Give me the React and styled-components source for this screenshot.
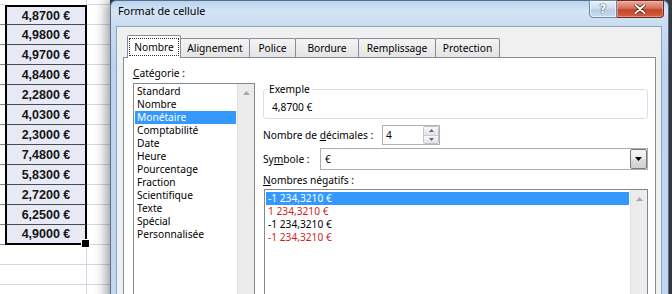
import React from 'react';
import styled, { createGlobalStyle } from 'styled-components';

const UI = `"Noto Sans", "Open Sans", sans-serif`;

const GlobalStyle = createGlobalStyle`
  html, body { margin: 0; padding: 0; }
  body { width: 672px; height: 294px; overflow: hidden; background: #3a3d42; }
  * { box-sizing: border-box; }
`;

const Screen = styled.div`
  display: flex;
  width: 672px;
  height: 294px;
  overflow: hidden;
  background: #3a3d42;
`;

/* ---------- spreadsheet ---------- */
const Sheet = styled.div`
  flex: none;
  width: 110px;
  height: 294px;
  background: #fff;
  display: flex;
  flex-direction: column;
  overflow: hidden;
`;

const SheetRow = styled.div`
  flex: none;
  display: grid;
  grid-template-columns: 5px 82px 1fr;
  height: ${p => p.$h}px;
`;

const EdgeCell = styled.div`
  border-bottom: 1px solid ${p => (p.$dark ? '#8a8a8a' : '#d0d7e5')};
`;

const ValueCell = styled.div`
  position: relative;
  display: flex;
  align-items: center;
  justify-content: center;
  font: bold 12.5px "Liberation Sans", Arial, sans-serif;
  color: #151515;
  background: ${p => (p.$sel ? '#e7eaf5' : '#fff')};
  border-left: ${p => (p.$sel ? '2px solid #000' : 'none')};
  border-right: ${p => (p.$sel ? '2px solid #000' : '1px solid #d0d7e5')};
  border-top: ${p => (p.$first ? '2px solid #000' : 'none')};
  border-bottom: ${p =>
    p.$last ? '2px solid #000' : p.$sel ? '1px solid #4a4a4a' : p.$blank ? 'none' : '1px solid #d0d7e5'};

  &::after {
    content: '';
    display: ${p => (p.$last ? 'block' : 'none')};
    position: absolute;
    right: -5px;
    bottom: -5px;
    width: 7px;
    height: 7px;
    background: #000;
    border: 1px solid #fff;
    z-index: 2;
  }
`;

const SideCell = styled.div`
  border-bottom: ${p => (p.$blank ? 'none' : '1px solid #d0d7e5')};
`;

/* ---------- dialog window ---------- */
const Dialog = styled.div`
  flex: none;
  width: 559px;
  height: 340px;
  position: relative;
  z-index: 1;
  display: flex;
  flex-direction: column;
  padding: 0 6px 0 5px;
  border: 1px solid #55708f;
  border-bottom: none;
  border-radius: 6px 6px 0 0;
  background: linear-gradient(180deg, #b9d3ee 0px, #d4e4f5 10px, #c9dcf1 24px, #bcd4ee 60px, #c2d8ef 100%);
  box-shadow: -3px 0 12px 1px rgba(0, 0, 0, 0.38);
`;

const TitleBar = styled.div`
  flex: none;
  height: 25px;
  display: flex;
  align-items: flex-start;
  justify-content: space-between;
  margin-right: -2px;
`;

const Title = styled.div`
  padding: 3px 0 0 2px;
  font: 10.8px/14px ${UI};
  color: #000;
`;

const CaptionButtons = styled.div`
  display: flex;
  margin-top: -1px;
`;

const CaptionButton = styled.div`
  width: ${p => p.$w}px;
  height: 18px;
  display: flex;
  align-items: center;
  justify-content: center;
  border: 1px solid ${p => (p.$close ? '#6b2a22' : '#6d86a3')};
  border-left: ${p => (p.$close ? 'none' : undefined)};
  border-radius: ${p => (p.$close ? '0 0 4px 0' : '0 0 0 4px')};
  background: ${p =>
    p.$close
      ? 'linear-gradient(180deg, #e9a99c 0%, #d7715d 45%, #c4442b 55%, #d2613f 100%)'
      : 'linear-gradient(180deg, #e6eef8 0%, #d0deef 45%, #b8cce4 55%, #c9dbee 100%)'};
  box-shadow: inset 0 0 0 1px ${p => (p.$close ? 'rgba(255,200,190,0.45)' : 'rgba(255,255,255,0.6)')};
`;

const HelpGlyph = styled.span`
  font: bold 12px/12px "DejaVu Sans", sans-serif;
  color: #ffffff;
  text-shadow: 0 0 1px #3f5670, 0 0 1px #3f5670, 0 0 1px #3f5670;
`;

const Client = styled.div`
  flex: 1;
  display: flex;
  flex-direction: column;
  background: #f0f0f0;
  border: 1px solid #8fa6bf;
  padding: 8px 5px 0 6px;
`;

const TabStrip = styled.div`
  position: relative;
  z-index: 1;
  flex: none;
  display: flex;
  align-items: flex-end;
  height: 23px;
  margin-bottom: -1px;
  padding-left: 4px;
`;

const Tab = styled.div`
  position: relative;
  z-index: ${p => (p.$active ? 2 : 1)};
  flex: none;
  width: ${p => p.$w}px;
  height: ${p => (p.$active ? 23 : 19)}px;
  margin-left: ${p => (p.$first ? 0 : -1)}px;
  margin-bottom: ${p => (p.$active ? 0 : 1)}px;
  display: flex;
  align-items: ${p => (p.$active ? 'flex-start' : 'center')};
  justify-content: center;
  padding-top: ${p => (p.$active ? 2 : 0)}px;
  border: 1px solid #898c95;
  border-bottom: none;
  border-radius: 2px 2px 0 0;
  background: ${p => (p.$active ? '#fff' : 'linear-gradient(180deg, #f4f4f4 0%, #ececec 50%, #e3e3e3 100%)')};
  font: 10.2px/13px ${UI};
  color: #000;
`;

const FocusRect = styled.span`
  display: flex;
  align-items: center;
  justify-content: center;
  width: 50px;
  height: 18px;
  border: 1px dotted #333;
`;

const Panel = styled.div`
  flex: 1;
  display: flex;
  gap: 8px;
  background: #fff;
  border: 1px solid #898c95;
  padding: 9px 7px 0 9px;
`;

const Column = styled.div`
  display: flex;
  flex-direction: column;
  width: ${p => (p.$w ? `${p.$w}px` : 'auto')};
  flex: ${p => (p.$w ? 'none' : '1')};
`;

const FieldLabel = styled.div`
  flex: none;
  width: ${p => (p.$w ? `${p.$w}px` : 'auto')};
  margin-top: ${p => p.$mt || 0}px;
  font: 10.2px/13px ${UI};
  color: #000;
  white-space: nowrap;

  u {
    text-decoration: underline;
    text-underline-offset: 1px;
  }
`;

const ListBox = styled.div`
  flex: 1;
  display: flex;
  margin-top: ${p => p.$mt}px;
  margin-left: ${p => p.$ml || 0}px;
  border: 1px solid #828790;
  background: #fff;
  overflow: hidden;
`;

const ListItems = styled.div`
  flex: 1;
  display: flex;
  flex-direction: column;
  padding: ${p => p.$pt}px 1px 0 1px;
`;

const ListItem = styled.div`
  height: 13px;
  padding-left: 2px;
  font: 10.2px/13px ${UI};
  white-space: nowrap;
  color: ${p => (p.$selected ? '#fff' : p.$red ? '#cc1f1f' : '#000')};
  background: ${p => (p.$selected ? '#3399ff' : 'transparent')};
`;

const ScrollBar = styled.div`
  flex: none;
  width: 17px;
  background: #ececec;
  border-left: 1px solid #e2e2e2;
  display: flex;
  flex-direction: column;
`;

const ScrollArrow = styled.div`
  height: 17px;
  display: flex;
  align-items: center;
  justify-content: center;
`;

const GroupBox = styled.fieldset`
  flex: none;
  margin: 16px 0 0 0;
  padding: 5px 8px 4px 8px;
  border: 1px solid #d5dfe5;
  border-radius: 3px;
  min-width: 0;
`;

const GroupLegend = styled.legend`
  margin-left: -5px;
  padding: 0 2px;
  font: 10.2px/13px ${UI};
  color: #000;
`;

const SampleValue = styled.div`
  font: 10.2px/13px ${UI};
  color: #000;
`;

const FormRow = styled.div`
  flex: none;
  display: flex;
  align-items: center;
  height: ${p => p.$h}px;
  margin-top: ${p => p.$mt}px;
`;

const SpinBox = styled.div`
  width: 58px;
  height: 20px;
  display: flex;
  align-items: stretch;
  border: 1px solid #aeb3b8;
  background: #fff;
`;

const SpinValue = styled.div`
  flex: 1;
  padding-left: 3px;
  font: 10.2px/18px ${UI};
  color: #000;
`;

const SpinButtons = styled.div`
  width: 16px;
  display: flex;
  flex-direction: column;
  border: 1px solid #c2c6cc;
  border-radius: 2px;
`;

const SpinButton = styled.div`
  flex: 1;
  display: flex;
  align-items: center;
  justify-content: center;
  background: linear-gradient(180deg, #f7f7f7, #e4e4e4);
  & + & {
    border-top: 1px solid #c9cdd2;
  }
`;

const ComboBox = styled.div`
  flex: 1;
  height: 22px;
  display: flex;
  align-items: stretch;
  border: 1px solid #a9acb1;
  background: #fff;
`;

const ComboValue = styled.div`
  flex: 1;
  padding-left: 4px;
  font: 10.2px/20px ${UI};
  color: #000;
`;

const DropButton = styled.div`
  width: 17px;
  display: flex;
  align-items: center;
  justify-content: center;
  border: 1px solid #7a7a7a;
  border-radius: 2px;
  background: linear-gradient(180deg, #f4f4f4 0%, #ebebeb 50%, #dddddd 51%, #cfcfcf 100%);
`;

/* ---------- data ---------- */
const values = [
  '4,8700 €', '4,9800 €', '4,9700 €', '4,8400 €', '2,2800 €', '4,0300 €',
  '2,3000 €', '7,4800 €', '5,8300 €', '2,7200 €', '6,2500 €', '4,9000 €',
];

const categories = [
  'Standard', 'Nombre', 'Monétaire', 'Comptabilité', 'Date', 'Heure',
  'Pourcentage', 'Fraction', 'Scientifique', 'Texte', 'Spécial', 'Personnalisée',
];

const negatives = [
  { text: '-1 234,3210 €', selected: true },
  { text: '1 234,3210 €', red: true },
  { text: '-1 234,3210 €' },
  { text: '-1 234,3210 €', red: true },
];

const tabs = [
  ['Nombre', 54],
  ['Alignement', 70],
  ['Police', 47],
  ['Bordure', 64],
  ['Remplissage', 78],
  ['Protection', 65],
];

const UpArrow = ({ color = '#a8a8a8' }) => (
  <svg width="7" height="4" viewBox="0 0 7 4"><path d="M0 4 L3.5 0 L7 4 Z" fill={color} /></svg>
);

const SmallArrow = ({ up }) => (
  <svg width="5" height="3" viewBox="0 0 5 3">
    <path d={up ? 'M0 3 L2.5 0 L5 3 Z' : 'M0 0 L2.5 3 L5 0 Z'} fill="#5a6b80" />
  </svg>
);

const ScrollUp = () => (
  <ScrollBar>
    <ScrollArrow>
      <UpArrow />
    </ScrollArrow>
  </ScrollBar>
);

export default function App() {
  return (
    <>
      <GlobalStyle />
      <Screen>
        <Sheet>
          <SheetRow $h={5}>
            <EdgeCell />
            <ValueCell $blank />
            <SideCell />
          </SheetRow>
          {values.map((v, i) => (
            <SheetRow key={i} $h={20}>
              <EdgeCell $dark />
              <ValueCell $sel $first={i === 0} $last={i === values.length - 1}>
                {v}
              </ValueCell>
              <SideCell />
            </SheetRow>
          ))}
          {[0, 1, 2].map(i => (
            <SheetRow key={`e${i}`} $h={20}>
              <EdgeCell />
              <ValueCell />
              <SideCell />
            </SheetRow>
          ))}
        </Sheet>

        <Dialog>
          <TitleBar>
            <Title>Format de cellule</Title>
            <CaptionButtons>
              <CaptionButton $w={28}>
                <HelpGlyph>?</HelpGlyph>
              </CaptionButton>
              <CaptionButton $w={47} $close>
                <svg width="12" height="10" viewBox="0 0 12 10">
                  <path d="M1.5 1 L10.5 9 M10.5 1 L1.5 9" stroke="#5a1e16" strokeWidth="3.6" strokeLinecap="round" />
                  <path d="M1.5 1 L10.5 9 M10.5 1 L1.5 9" stroke="#ffffff" strokeWidth="2" strokeLinecap="round" />
                </svg>
              </CaptionButton>
            </CaptionButtons>
          </TitleBar>

          <Client>
            <TabStrip>
              {tabs.map(([label, w], i) => (
                <Tab key={label} $w={w} $active={i === 0} $first={i === 0}>
                  {i === 0 ? <FocusRect>{label}</FocusRect> : label}
                </Tab>
              ))}
            </TabStrip>

            <Panel>
              <Column $w={122}>
                <FieldLabel>
                  <u>C</u>atégorie :
                </FieldLabel>
                <ListBox $mt={3}>
                  <ListItems $pt={1}>
                    {categories.map(c => (
                      <ListItem key={c} $selected={c === 'Monétaire'}>
                        {c}
                      </ListItem>
                    ))}
                  </ListItems>
                  <ScrollUp />
                </ListBox>
              </Column>

              <Column>
                <GroupBox>
                  <GroupLegend>Exemple</GroupLegend>
                  <SampleValue>4,8700 €</SampleValue>
                </GroupBox>

                <FormRow $h={20} $mt={6}>
                  <FieldLabel $w={119}>
                    Nombre de <u>d</u>écimales :
                  </FieldLabel>
                  <SpinBox>
                    <SpinValue>4</SpinValue>
                    <SpinButtons>
                      <SpinButton>
                        <SmallArrow up />
                      </SpinButton>
                      <SpinButton>
                        <SmallArrow />
                      </SpinButton>
                    </SpinButtons>
                  </SpinBox>
                </FormRow>

                <FormRow $h={22} $mt={3}>
                  <FieldLabel $w={57}>
                    Sy<u>m</u>bole :
                  </FieldLabel>
                  <ComboBox>
                    <ComboValue>€</ComboValue>
                    <DropButton>
                      <svg width="7" height="4" viewBox="0 0 7 4"><path d="M0 0 L3.5 4 L7 0 Z" fill="#000" /></svg>
                    </DropButton>
                  </ComboBox>
                </FormRow>

                <FieldLabel $mt={4}>
                  <u>N</u>ombres négatifs :
                </FieldLabel>
                <ListBox $mt={2} $ml={1}>
                  <ListItems $pt={2}>
                    {negatives.map((n, i) => (
                      <ListItem key={i} $selected={n.selected} $red={n.red}>
                        {n.text}
                      </ListItem>
                    ))}
                  </ListItems>
                  <ScrollUp />
                </ListBox>
              </Column>
            </Panel>
          </Client>
        </Dialog>
      </Screen>
    </>
  );
}
